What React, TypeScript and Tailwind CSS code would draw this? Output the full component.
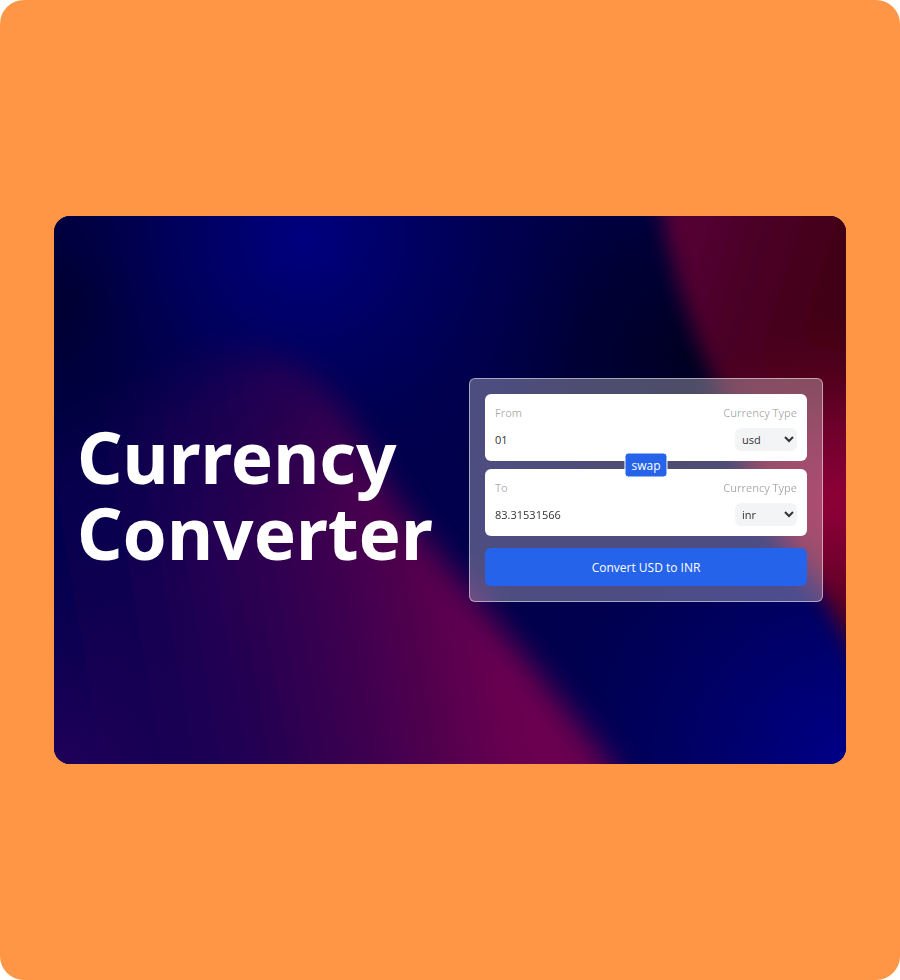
import { useId, useState } from "react";

const CURRENCIES = ["usd", "inr", "eur", "gbp"];

function Backdrop() {
  return (
    <svg
      className="absolute inset-0 h-full w-full"
      viewBox="0 0 792 548"
      preserveAspectRatio="none"
      aria-hidden="true"
    >
      <defs>
        <radialGradient id="topGlow" gradientUnits="userSpaceOnUse" cx="250" cy="20" r="290">
          <stop offset="0" stopColor="#000080" />
          <stop offset="0.45" stopColor="#000062" stopOpacity="0.8" />
          <stop offset="1" stopColor="#00004a" stopOpacity="0" />
        </radialGradient>
        <radialGradient id="cornerGlow" gradientUnits="userSpaceOnUse" cx="792" cy="548" r="380">
          <stop offset="0" stopColor="#000088" />
          <stop offset="0.5" stopColor="#000062" stopOpacity="0.8" />
          <stop offset="1" stopColor="#00004a" stopOpacity="0" />
        </radialGradient>
        <radialGradient id="leftShade" gradientUnits="userSpaceOnUse" cx="20" cy="80" r="230">
          <stop offset="0" stopColor="#00002a" />
          <stop offset="1" stopColor="#000040" stopOpacity="0" />
        </radialGradient>
        <radialGradient id="rightShade" gradientUnits="userSpaceOnUse" cx="640" cy="140" r="290">
          <stop offset="0" stopColor="#000022" />
          <stop offset="0.4" stopColor="#000032" stopOpacity="0.85" />
          <stop offset="1" stopColor="#000048" stopOpacity="0" />
        </radialGradient>
        <linearGradient id="waveFill" gradientUnits="userSpaceOnUse" x1="20" y1="400" x2="430" y2="330">
          <stop offset="0" stopColor="#0c0050" stopOpacity="0.5" />
          <stop offset="0.3" stopColor="#200052" />
          <stop offset="0.6" stopColor="#380050" />
          <stop offset="0.8" stopColor="#50004e" />
          <stop offset="1" stopColor="#6a0050" />
        </linearGradient>
        <linearGradient id="waveFade" gradientUnits="userSpaceOnUse" x1="80" y1="150" x2="180" y2="340">
          <stop offset="0" stopColor="#000" />
          <stop offset="0.35" stopColor="#999" />
          <stop offset="1" stopColor="#fff" />
        </linearGradient>
        <mask id="waveMask" maskUnits="userSpaceOnUse" x="-80" y="0" width="900" height="640">
          <rect x="-80" width="900" height="640" fill="url(#waveFade)" />
        </mask>
        <radialGradient id="footGlow" gradientUnits="userSpaceOnUse" cx="0" cy="570" r="260">
          <stop offset="0" stopColor="#24005a" />
          <stop offset="1" stopColor="#180052" stopOpacity="0" />
        </radialGradient>
        <linearGradient id="flameFill" gradientUnits="userSpaceOnUse" x1="620" y1="20" x2="780" y2="70">
          <stop offset="0" stopColor="#560036" />
          <stop offset="0.5" stopColor="#4a0026" />
          <stop offset="1" stopColor="#420016" />
        </linearGradient>
        <radialGradient id="flameGlow" gradientUnits="userSpaceOnUse" cx="780" cy="285" r="190">
          <stop offset="0" stopColor="#920038" />
          <stop offset="0.4" stopColor="#7c0032" stopOpacity="0.75" />
          <stop offset="1" stopColor="#50001c" stopOpacity="0" />
        </radialGradient>
        <filter id="soft" filterUnits="userSpaceOnUse" x="-120" y="-120" width="1100" height="860">
          <feGaussianBlur stdDeviation="15" />
        </filter>
        <filter id="softer" filterUnits="userSpaceOnUse" x="-120" y="-120" width="1100" height="860">
          <feGaussianBlur stdDeviation="10" />
        </filter>
      </defs>
      <rect width="792" height="548" fill="#00004c" />
      <rect width="792" height="548" fill="url(#rightShade)" />
      <rect width="792" height="548" fill="url(#leftShade)" />
      <rect width="792" height="548" fill="url(#topGlow)" />
      <rect width="792" height="548" fill="url(#cornerGlow)" />
      <g mask="url(#waveMask)">
        <path
          filter="url(#soft)"
          fill="url(#waveFill)"
          d="M-80 126H180C240 134 280 172 312 232C342 292 382 332 424 385C470 440 505 480 556 548L610 640H-80Z"
        />
      </g>
      <rect width="792" height="548" fill="url(#footGlow)" />
      <g filter="url(#softer)">
        <path
          fill="url(#flameFill)"
          d="M600 -60C608 30 634 110 668 180C686 240 702 290 745 345C770 380 785 405 805 450L900 500V-60Z"
        />
        <path
          fill="url(#flameGlow)"
          d="M600 -60C608 30 634 110 668 180C686 240 702 290 745 345C770 380 785 405 805 450L900 500V-60Z"
        />
      </g>
    </svg>
  );
}

type FieldProps = {
  label: string;
  value: string;
  onValue?: (value: string) => void;
  currency: string;
  onCurrency: (currency: string) => void;
};

function AmountField({ label, value, onValue, currency, onCurrency }: FieldProps) {
  const amountId = useId();
  const currencyId = useId();
  return (
    <div className="flex justify-between rounded-md bg-white px-[10px] pt-[11px] pb-[10px] text-[11px] leading-4">
      <div className="flex min-w-0 flex-1 flex-col gap-[7px]">
        <label htmlFor={amountId} className="text-black/35">
          {label}
        </label>
        <input
          id={amountId}
          className="h-[23px] w-full bg-transparent text-[#333] outline-none"
          value={value}
          readOnly={!onValue}
          onChange={(e) => onValue?.(e.target.value)}
        />
      </div>
      <div className="flex flex-col items-end gap-[7px]">
        <label htmlFor={currencyId} className="text-black/35">
          Currency Type
        </label>
        <select
          id={currencyId}
          className="h-[23px] w-[62px] rounded-md bg-gray-100 px-[3px] text-[#333] outline-none"
          value={currency}
          onChange={(e) => onCurrency(e.target.value)}
        >
          {CURRENCIES.map((c) => (
            <option key={c} value={c}>
              {c}
            </option>
          ))}
        </select>
      </div>
    </div>
  );
}

export default function App() {
  const [amount, setAmount] = useState("01");
  const [result, setResult] = useState("83.31531566");
  const [from, setFrom] = useState("usd");
  const [to, setTo] = useState("inr");

  const swap = () => {
    setFrom(to);
    setTo(from);
    setAmount(result);
    setResult(amount);
  };

  return (
    <div className="bg-white font-['Open_Sans','Noto_Sans',sans-serif]">
      <main className="flex min-h-screen items-center justify-center rounded-3xl bg-[#ff9645] px-[6%]">
        <section className="relative isolate flex aspect-[792/548] w-full items-center justify-between overflow-hidden rounded-2xl px-[23px]">
          <Backdrop />
          <h1 className="relative pt-[10px] font-['Noto_Sans','Open_Sans',sans-serif] text-[71px] leading-[76px] font-bold text-white">
            Currency
            <br />
            Converter
          </h1>
          <form
            className="relative w-[354px] shrink-0 rounded-md border border-white/50 bg-white/30 p-[15px] backdrop-blur-sm"
            onSubmit={(e) => e.preventDefault()}
          >
            <div className="relative flex flex-col gap-2">
              <AmountField
                label="From"
                value={amount}
                onValue={setAmount}
                currency={from}
                onCurrency={setFrom}
              />
              <AmountField label="To" value={result} currency={to} onCurrency={setTo} />
              <button
                type="button"
                onClick={swap}
                className="absolute top-1/2 left-1/2 -translate-x-1/2 -translate-y-1/2 rounded-sm border border-white bg-[#2563eb] px-[6px] pt-1 pb-[3px] text-xs text-white"
              >
                swap
              </button>
            </div>
            <button
              type="submit"
              className="mt-3 h-[38px] w-full rounded-md bg-[#2563eb] pt-[2px] text-xs text-white"
            >
              Convert {from.toUpperCase()} to {to.toUpperCase()}
            </button>
          </form>
        </section>
      </main>
    </div>
  );
}
